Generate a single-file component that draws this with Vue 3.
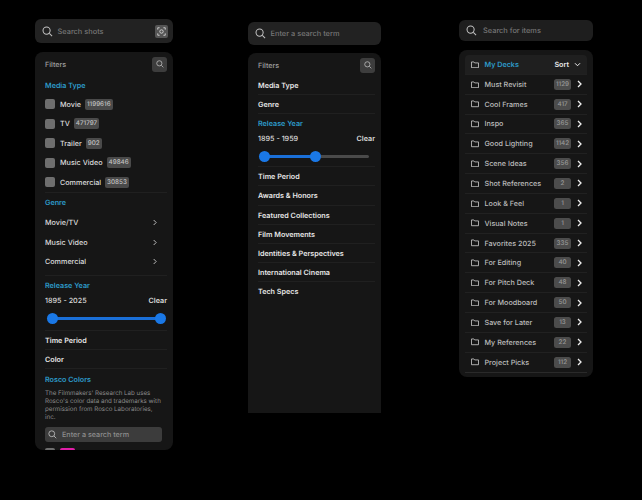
<script setup>
const mediaTypes = [
  { name: 'Movie', count: '1199616' },
  { name: 'TV', count: '471797' },
  { name: 'Trailer', count: '902' },
  { name: 'Music Video', count: '49846' },
  { name: 'Commercial', count: '30853' }
]
const genres = ['Movie/TV', 'Music Video', 'Commercial']
const moreFilters = [
  'Time Period',
  'Awards & Honors',
  'Featured Collections',
  'Film Movements',
  'Identities & Perspectives',
  'International Cinema',
  'Tech Specs'
]
const decks = [
  { name: 'Must Revisit', count: 1129 },
  { name: 'Cool Frames', count: 417 },
  { name: 'Inspo', count: 365 },
  { name: 'Good Lighting', count: 1142 },
  { name: 'Scene Ideas', count: 356 },
  { name: 'Shot References', count: 2 },
  { name: 'Look & Feel', count: 1 },
  { name: 'Visual Notes', count: 1 },
  { name: 'Favorites 2025', count: 335 },
  { name: 'For Editing', count: 40 },
  { name: 'For Pitch Deck', count: 48 },
  { name: 'For Moodboard', count: 50 },
  { name: 'Save for Later', count: 13 },
  { name: 'My References', count: 22 },
  { name: 'Project Picks', count: 112 }
]
</script>

<template>
  <div class="page">
    <section class="col col-left">
      <div class="search">
        <svg class="mag" viewBox="0 0 12 12"><circle cx="5" cy="5" r="3.9" /><path d="M8 8l3 3" /></svg>
        <span class="placeholder">Search shots</span>
        <span class="scan">
          <svg viewBox="0 0 12 12"><path d="M1 3.5V1h2.5M8.500 1H11v2.500M11 8.500V11H8.500M3.500 11H1V8.500" /><circle cx="6" cy="6" r="2.300" /></svg>
        </span>
      </div>
      <div class="panel panel-left">
        <div class="filters-head">
          <span>Filters</span>
          <span class="icon-btn"><svg class="mag small" viewBox="0 0 12 12"><circle cx="5" cy="5" r="3.900" /><path d="M8 8l3 3" /></svg></span>
        </div>
        <h3 class="heading">Media Type</h3>
        <div class="check-list">
          <div v-for="m in mediaTypes" :key="m.name" class="check-row">
            <span class="box"></span>
            <span class="label">{{ m.name }}</span>
            <span class="count">{{ m.count }}</span>
          </div>
        </div>
        <div class="block genre">
          <h3 class="heading">Genre</h3>
          <div v-for="g in genres" :key="g" class="genre-row">
            <span>{{ g }}</span>
            <svg class="chev" viewBox="0 0 6 8"><path d="M2 1l3 3-3 3" /></svg>
          </div>
        </div>
        <div class="block year">
          <h3 class="heading">Release Year</h3>
          <div class="range-row"><span>1895 - 2025</span><span class="clear">Clear</span></div>
          <div class="slider">
            <span class="fill"></span>
            <span class="knob knob-a"></span>
            <span class="knob knob-b"></span>
          </div>
        </div>
        <div class="block plain">Time Period</div>
        <div class="block plain">Color</div>
        <div class="block rosco">
          <h3 class="heading">Rosco Colors</h3>
          <p class="note">The Filmmakers' Research Lab uses Rosco's color data and trademarks with permission from Rosco Laboratories, inc.</p>
          <div class="inner-search">
            <svg class="mag" viewBox="0 0 12 12"><circle cx="5" cy="5" r="3.900" /><path d="M8 8l3 3" /></svg>
            <span>Enter a search term</span>
          </div>
          <div class="swatch-row"><span class="box"></span><span class="swatch"></span></div>
        </div>
      </div>
    </section>

    <section class="col col-mid">
      <div class="search">
        <svg class="mag" viewBox="0 0 12 12"><circle cx="5" cy="5" r="3.900" /><path d="M8 8l3 3" /></svg>
        <span class="placeholder">Enter a search term</span>
      </div>
      <div class="panel panel-mid">
        <div class="filters-head">
          <span>Filters</span>
          <span class="icon-btn"><svg class="mag small" viewBox="0 0 12 12"><circle cx="5" cy="5" r="3.900" /><path d="M8 8l3 3" /></svg></span>
        </div>
        <div class="plain first">Media Type</div>
        <div class="block plain">Genre</div>
        <div class="block year">
          <h3 class="heading">Release Year</h3>
          <div class="range-row"><span>1895 - 1959</span><span class="clear">Clear</span></div>
          <div class="slider partial">
            <span class="fill"></span>
            <span class="knob knob-a"></span>
            <span class="knob knob-b"></span>
          </div>
        </div>
        <div v-for="f in moreFilters" :key="f" class="block plain">{{ f }}</div>
      </div>
    </section>

    <section class="col col-right">
      <div class="search">
        <svg class="mag" viewBox="0 0 12 12"><circle cx="5" cy="5" r="3.900" /><path d="M8 8l3 3" /></svg>
        <span class="placeholder">Search for items</span>
      </div>
      <div class="panel panel-right">
        <div class="deck-row deck-head">
          <svg class="folder" viewBox="0 0 10 9"><path d="M.6 1h3l1 1.200h4.800v6H.6z" /></svg>
          <span class="deck-name">My Decks</span>
          <span class="sort">Sort</span>
          <svg class="chev-down" viewBox="0 0 8 6"><path d="M1 1.500l3 3 3-3" /></svg>
        </div>
        <div v-for="d in decks" :key="d.name" class="deck-row">
          <svg class="folder" viewBox="0 0 10 9"><path d="M.6 1h3l1 1.200h4.800v6H.6z" /></svg>
          <span class="deck-name">{{ d.name }}</span>
          <span class="deck-count">{{ d.count }}</span>
          <svg class="chev white" viewBox="0 0 6 8"><path d="M2 1l3 3-3 3" /></svg>
        </div>
      </div>
    </section>
  </div>
</template>

<style>
html,
body {
  margin: 0;
  background: #000;
}
</style>

<style scoped>
.page {
  width: 642px;
  height: 500px;
  overflow: hidden;
  display: flex;
  align-items: flex-start;
  background: #000;
  color: #e4e4e4;
  font-family: Inter, "Liberation Sans", sans-serif;
  font-size: 7.2px;
  font-weight: 500;
  text-rendering: geometricPrecision;
}

.col {
  display: flex;
  flex-direction: column;
  flex: none;
}

.col-left {
  width: 138px;
  margin: 19px 0 0 35px;
  gap: 9px;
}

.col-mid {
  width: 133px;
  margin: 22px 0 0 75px;
  gap: 8px;
}

.col-right {
  width: 134px;
  margin: 20px 0 0 78px;
  gap: 9px;
}

.search {
  height: 24px;
  display: flex;
  align-items: center;
  gap: 4.500px;
  padding: 0 5px 0 7px;
  background: #222;
  border-radius: 6px;
}

.col-mid .search {
  height: 23px;
}

.col-right .search {
  height: 21px;
  gap: 6px;
  background: #1e1e1e;
}

.placeholder {
  flex: 1;
  font-size: 7.400px;
  color: #777;
}

.mag {
  width: 11px;
  height: 11px;
  flex: none;
  fill: none;
  stroke: #c4c4c4;
  stroke-width: 1.100;
}

.mag.small {
  width: 8px;
  height: 8px;
  stroke: #c8c8c8;
}

.scan {
  width: 13px;
  height: 13px;
  display: flex;
  align-items: center;
  justify-content: center;
  background: #555;
  border-radius: 2px;
}

.scan svg {
  width: 9px;
  height: 9px;
  fill: none;
  stroke: #e0e0e0;
  stroke-width: 1.100;
}

.panel {
  background: #161616;
  border-radius: 8px;
  box-sizing: border-box;
  overflow: hidden;
  padding: 0 6px 0 10px;
}

.panel-left {
  height: 398px;
}

.panel-mid {
  height: 360px;
  border-radius: 8px 8px 0 0;
}

.panel-right {
  height: 327px;
  padding: 5px 6px;
}

.filters-head {
  height: 24px;
  display: flex;
  align-items: center;
  justify-content: space-between;
  color: #a0a0a0;
}

.icon-btn {
  width: 15px;
  height: 15px;
  display: flex;
  align-items: center;
  justify-content: center;
  background: #3d3d3d;
  border-radius: 3px;
}

.heading {
  margin: 0;
  height: 10px;
  line-height: 10px;
  font-size: 7.200px;
  font-weight: 600;
  color: #2d9ccb;
}

.panel-left > .heading {
  margin-top: 4.500px;
}

.check-list {
  margin-top: 4px;
}

.check-row {
  height: 19.500px;
  display: flex;
  align-items: center;
}

.box {
  width: 10px;
  height: 10px;
  flex: none;
  background: #6e6e6e;
  border-radius: 2px;
}

.label {
  margin-left: 5px;
  color: #dcdcdc;
}

.count {
  margin-left: 4px;
  padding: 0 2px;
  height: 11px;
  line-height: 11px;
  background: #4a4a4a;
  border-radius: 2px;
  color: #c2c2c2;
  font-size: 6.300px;
}

.block {
  border-top: 1px solid #202020;
}

.genre {
  padding-top: 5px;
  height: 83px;
  box-sizing: border-box;
}

.genre-row {
  height: 19.500px;
  display: flex;
  align-items: center;
  justify-content: space-between;
  padding-right: 10px;
  color: #dcdcdc;
}

.genre .heading {
  margin-bottom: 5px;
}

.chev {
  width: 5px;
  height: 7px;
  fill: none;
  stroke: #c8c8c8;
  stroke-width: 1.100;
}

.chev.white {
  width: 6px;
  height: 8px;
  stroke: #f0f0f0;
  stroke-width: 1.300;
}

.year {
  padding-top: 5px;
}

.range-row {
  margin-top: 5px;
  display: flex;
  justify-content: space-between;
  line-height: 10px;
  color: #dcdcdc;
}

.clear {
  font-weight: 600;
}

.slider {
  position: relative;
  height: 3px;
  margin: 11px 7px 10px 7px;
  background: #4a4a4a;
  border-radius: 2px;
}

.fill {
  position: absolute;
  left: 0;
  top: 0;
  bottom: 0;
  width: 100%;
  background: #1a6fd8;
}

.knob {
  position: absolute;
  top: -4px;
  width: 11px;
  height: 11px;
  background: #1a78e6;
  border-radius: 50%;
  margin-left: -5.500px;
}

.knob-a {
  left: 0;
}

.knob-b {
  left: 100%;
}

.slider.partial {
  margin: 11px 6px 8px 6px;
}

.slider.partial .fill {
  width: 49.500%;
}

.slider.partial .knob-b {
  left: 49.500%;
}

.plain {
  height: 19.200px;
  box-sizing: border-box;
  line-height: 19px;
  font-weight: 600;
  color: #e8e8e8;
}

.plain.first {
  height: 18px;
  margin-top: -1px;
}

.rosco {
  padding-top: 6px;
}

.note {
  margin: 5px 5px 0 0;
  font-size: 6.200px;
  line-height: 8px;
  font-weight: 400;
  color: #8c8c8c;
}

.inner-search {
  height: 15px;
  margin: 5px 5px 0 0;
  display: flex;
  align-items: center;
  gap: 5px;
  padding: 0 3px;
  background: #3c3c3c;
  border-radius: 3px;
  color: #8e8e8e;
}

.inner-search .mag {
  width: 9px;
  height: 9px;
}

.swatch-row {
  margin-top: 6px;
  display: flex;
  gap: 5px;
}

.swatch {
  width: 15px;
  height: 10px;
  background: #e01ea8;
  border-radius: 2px;
}

.deck-row {
  height: 19.850px;
  box-sizing: border-box;
  display: flex;
  align-items: center;
  padding: 0 5px 0 6px;
  border-bottom: 1px solid #212121;
}

.deck-row:last-child {
  border-bottom-color: #2a2a2a;
}

.deck-head {
  background: #1f1f1f;
  border-radius: 4px 4px 0 0;
}

.folder {
  width: 8px;
  height: 7.500px;
  flex: none;
  fill: none;
  stroke: #d0d0d0;
  stroke-width: 1;
}

.deck-name {
  flex: 1;
  margin-left: 5.500px;
  color: #bdbdbd;
}

.deck-head .deck-name {
  font-weight: 600;
  color: #2d9ccb;
}

.sort {
  font-weight: 600;
  color: #ececec;
}

.chev-down {
  width: 7px;
  height: 5px;
  margin-left: 5px;
  margin-right: 1px;
  fill: none;
  stroke: #f0f0f0;
  stroke-width: 1.200;
}

.deck-count {
  min-width: 17px;
  height: 11px;
  line-height: 11px;
  text-align: center;
  margin-right: 5px;
  background: #4c4c4c;
  border-radius: 2.500px;
  color: #999;
  font-size: 6.300px;
}
</style>
